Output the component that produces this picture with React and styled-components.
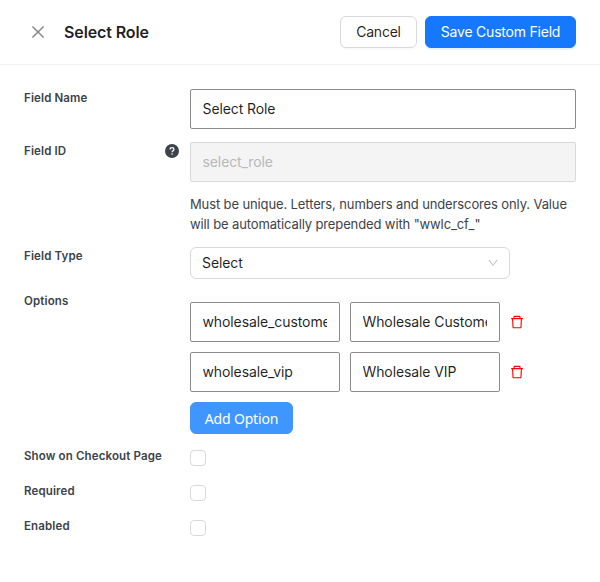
import React from "react";
import styled, { createGlobalStyle } from "styled-components";
import { AiOutlineClose, AiOutlineDelete, AiOutlineDown } from "react-icons/ai";

const GlobalStyle = createGlobalStyle`
  * { box-sizing: border-box; }
  body {
    margin: 0;
    background: #fff;
    font-family: Inter, "Liberation Sans", sans-serif;
    font-size: 14px;
    color: rgba(0, 0, 0, 0.88);
  }
  input, button { font-family: inherit; }
`;

const Drawer = styled.main`
  width: 600px;
  height: 582px;
  overflow: hidden;
  background: #fff;
`;

const Header = styled.header`
  display: flex;
  align-items: center;
  height: 65px;
  padding: 0 24px;
  border-bottom: 1px solid #f0f0f0;
`;

const CloseButton = styled.button`
  display: flex;
  padding: 0;
  margin: 0 17px 0 5px;
  border: 0;
  background: none;
  color: #858585;
  font-size: 18px;
`;

const Title = styled.h1`
  flex: 1;
  margin: 0;
  font-size: 16px;
  font-weight: 600;
  line-height: 24px;
  letter-spacing: -0.12px;
`;

const Actions = styled.div`
  display: flex;
  gap: 8px;
`;

const Button = styled.button`
  width: ${(p) => p.$width}px;
  height: 32px;
  padding: 0;
  border: 1px solid ${(p) => p.$fill || "#d9d9d9"};
  border-radius: 6px;
  background: ${(p) => p.$fill || "#fff"};
  color: ${(p) => (p.$fill ? "#fff" : "rgba(0, 0, 0, 0.88)")};
  box-shadow: 0 2px 0 ${(p) => (p.$fill ? "rgba(5, 145, 255, 0.1)" : "rgba(0, 0, 0, 0.02)")};
  font-size: 14px;
  line-height: 22px;
  letter-spacing: -0.22px;
  white-space: nowrap;
`;

const AddButton = styled(Button)`
  padding-top: 1px;
  box-shadow: none;
  font-family: "Noto Sans", "Open Sans", sans-serif;
  letter-spacing: -0.18px;
`;

const Form = styled.form`
  padding: 24px;
`;

const Row = styled.div`
  display: grid;
  grid-template-columns: 166px 386px;
  align-items: start;
  height: ${(p) => p.$height}px;
`;

const Label = styled.div`
  display: flex;
  align-items: center;
  justify-content: space-between;
  height: 18px;
  padding-right: 11px;
  color: #3c434a;
  font-size: 11.5px;
  font-weight: 600;
  letter-spacing: 0.14px;
  white-space: nowrap;
`;

const HelpIcon = styled.svg`
  width: 14px;
  height: 14px;
`;

const TextInput = styled.input`
  width: ${(p) => p.$width || "100%"};
  height: 40px;
  padding: 0 12px 2px 11.5px;
  border: 1px solid #8c8c8f;
  border-radius: 2px;
  background: #fff;
  color: rgba(0, 0, 0, 0.88);
  font-size: 14px;
  letter-spacing: -0.1px;
  outline: none;

  &:disabled {
    border-color: #d9d9d9;
    background: #f4f4f4;
    color: #b8b8b8;
  }
`;

const Hint = styled.p`
  margin: 12px 0 0;
  color: #3c434a;
  font-size: 13px;
  line-height: 20px;
  letter-spacing: -0.12px;
  white-space: nowrap;
`;

const SelectBox = styled.div`
  display: flex;
  align-items: center;
  justify-content: space-between;
  width: 320px;
  height: 32px;
  padding: 0 10px 0 11px;
  border: 1px solid #d9d9d9;
  border-radius: 6px;
  color: rgba(0, 0, 0, 0.88);
  letter-spacing: -0.1px;

  svg { color: #bfbfbf; font-size: 12px; }
`;

const SelectValue = styled.span`
  padding-bottom: 2px;
`;

const Options = styled.div`
  display: flex;
  flex-direction: column;
  gap: 10px;
  padding-top: 10px;
`;

const OptionRow = styled.div`
  display: flex;
  align-items: center;
  gap: 10px;
`;

const DeleteButton = styled.button`
  display: flex;
  margin-left: -1px;
  padding: 0;
  border: 0;
  background: none;
  color: #f00;
  font-size: 16px;
`;

const Checkbox = styled.input.attrs({ type: "checkbox" })`
  appearance: none;
  width: 16px;
  height: 16px;
  margin: 3px 0 0;
  border: 1px solid #d9d9d9;
  border-radius: 4px;
  background: #fff;
`;

const options = [
  ["wholesale_customer", "Wholesale Customer"],
  ["wholesale_vip", "Wholesale VIP"],
];

const toggles = ["Show on Checkout Page", "Required", "Enabled"];

export default function App() {
  return (
    <Drawer>
      <GlobalStyle />
      <Header>
        <CloseButton aria-label="Close"><AiOutlineClose /></CloseButton>
        <Title>Select Role</Title>
        <Actions>
          <Button $width={77}>Cancel</Button>
          <Button $width={151} $fill="#1677ff">Save Custom Field</Button>
        </Actions>
      </Header>
      <Form>
        <Row $height={53}>
          <Label>Field Name</Label>
          <TextInput defaultValue="Select Role" />
        </Row>
        <Row $height={105}>
          <Label>
            Field ID
            <HelpIcon viewBox="0 0 14 14" aria-label="Help">
              <circle cx="7" cy="7" r="7" fill="#3c434a" />
              <path d="M5.1 5.5C5.1 4.3 5.9 3.7 7 3.7s1.9.7 1.9 1.7C8.9 6.7 7.1 6.7 7.1 8.2" fill="none" stroke="#fff" strokeWidth="1.3" />
              <circle cx="7.1" cy="10" r=".8" fill="#fff" />
            </HelpIcon>
          </Label>
          <div>
            <TextInput defaultValue="select_role" disabled />
            <Hint>
              Must be unique. Letters, numbers and underscores only. Value
              <br />
              will be automatically prepended with "wwlc_cf_"
            </Hint>
          </div>
        </Row>
        <Row $height={45}>
          <Label>Field Type</Label>
          <SelectBox>
            <SelectValue>Select</SelectValue>
            <AiOutlineDown />
          </SelectBox>
        </Row>
        <Row $height={155}>
          <Label>Options</Label>
          <Options>
            {options.map(([value, text]) => (
              <OptionRow key={value}>
                <TextInput $width="150px" defaultValue={value} />
                <TextInput $width="150px" defaultValue={text} />
                <DeleteButton type="button" aria-label="Delete option"><AiOutlineDelete /></DeleteButton>
              </OptionRow>
            ))}
            <AddButton type="button" $width={103} $fill="#4096ff">Add Option</AddButton>
          </Options>
        </Row>
        {toggles.map((name) => (
          <Row key={name} $height={35}>
            <Label>{name}</Label>
            <Checkbox aria-label={name} />
          </Row>
        ))}
      </Form>
    </Drawer>
  );
}
